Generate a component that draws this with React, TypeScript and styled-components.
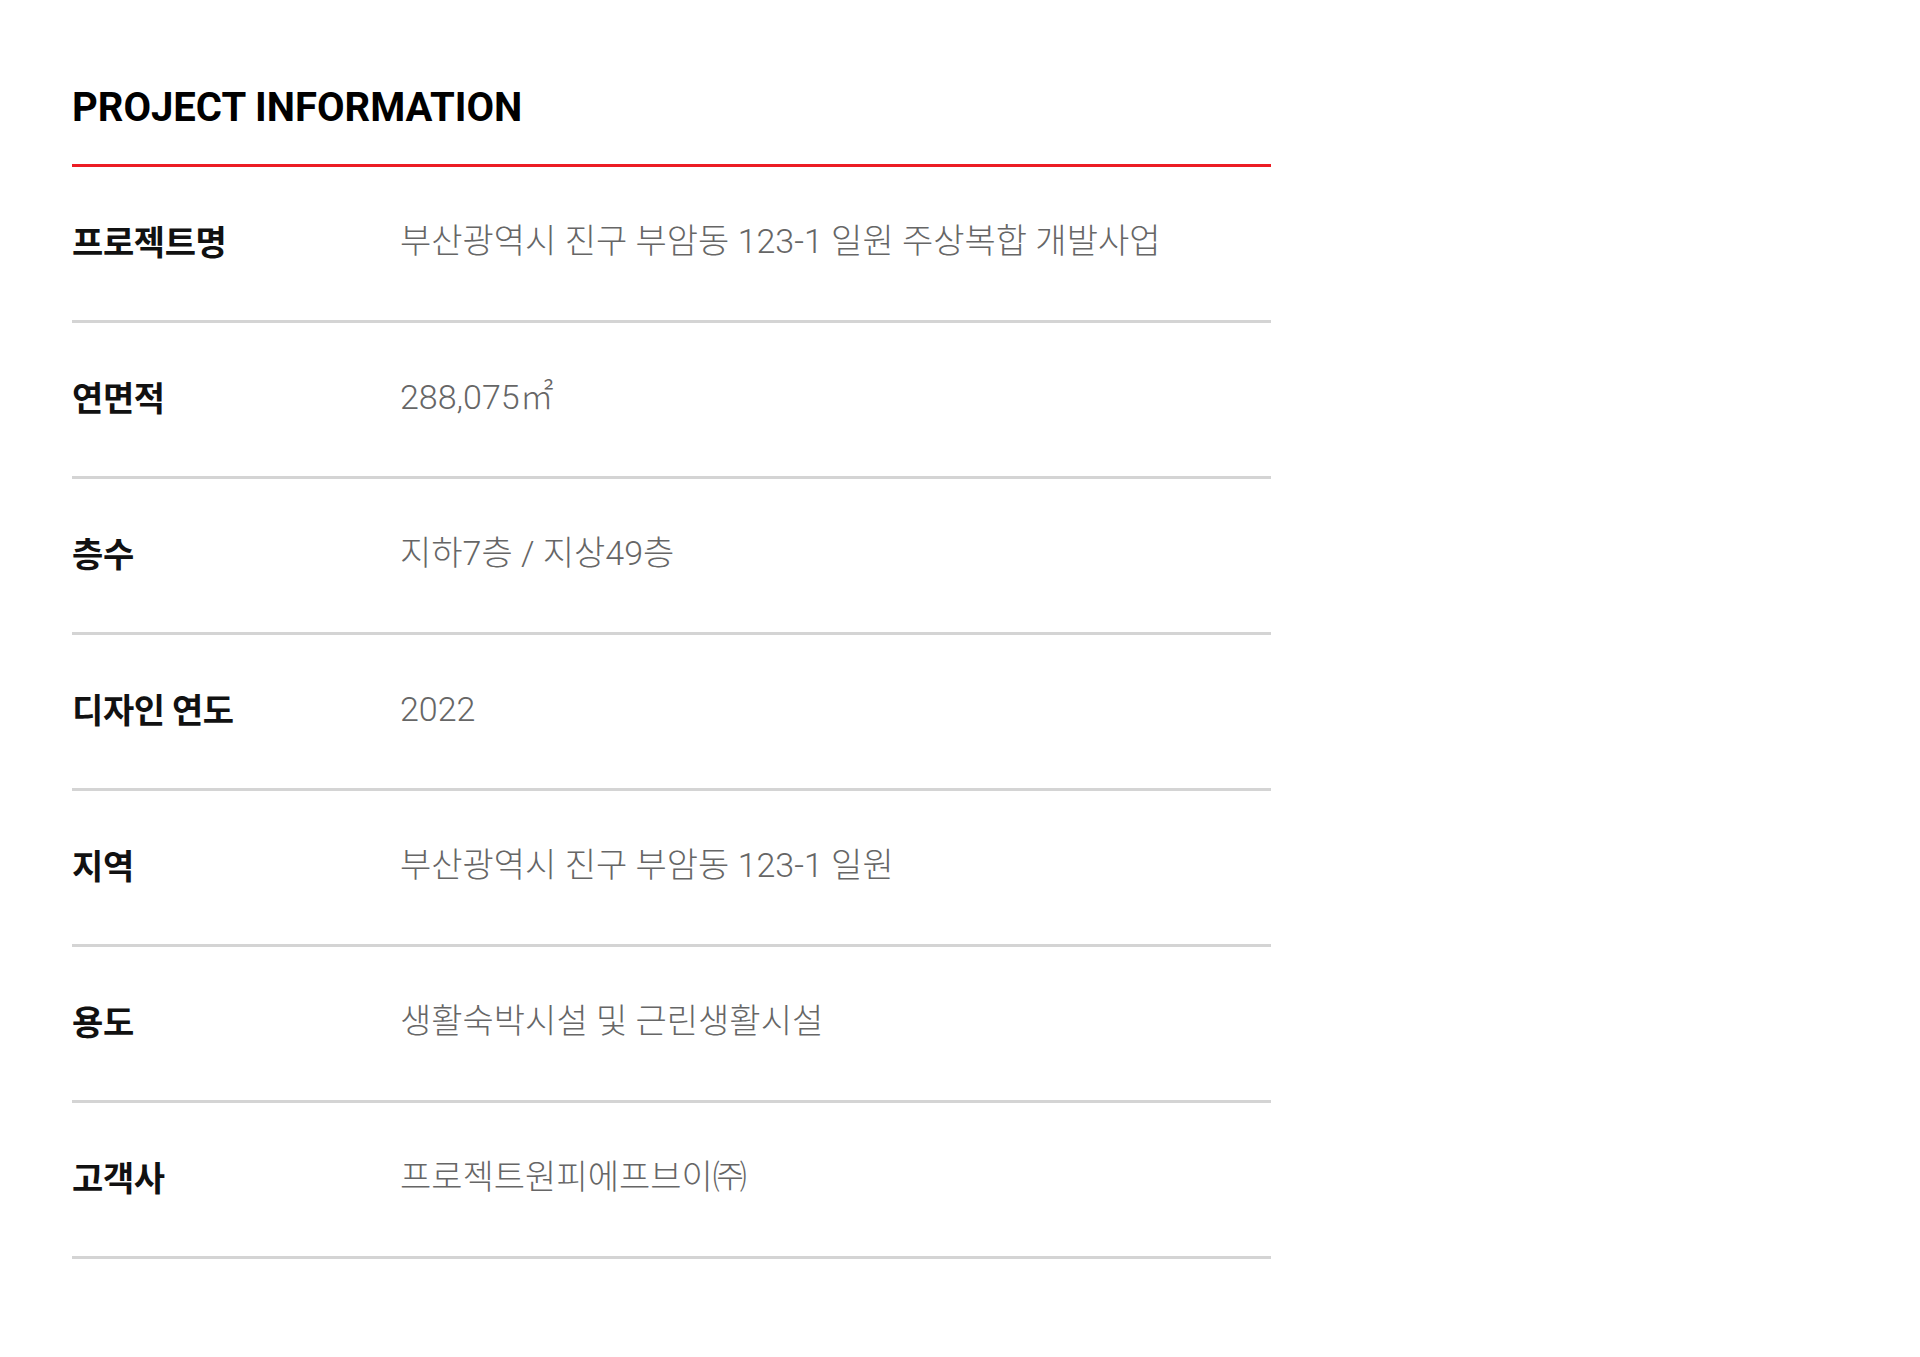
import styled, { createGlobalStyle } from "styled-components";

const GlobalStyle = createGlobalStyle`
  html, body {
    margin: 0;
    padding: 0;
    background: #fff;
  }
  body {
    font-family: Roboto, "Noto Sans CJK KR", sans-serif;
  }
`;

const Section = styled.section`
  width: 1199px;
  padding: 88px 0 100px 72px;
`;

const Title = styled.h2`
  margin: 0 0 36px;
  font-family: Roboto, "Noto Sans CJK KR", sans-serif;
  font-size: 40px;
  line-height: 40px;
  font-weight: 700;
  letter-spacing: 0;
  color: #000;
`;

const InfoList = styled.dl`
  margin: 0;
  border-top: 3px solid #ec1c24;
`;

// each row: 153px body + 3px grey rule
const Row = styled.div`
  display: grid;
  grid-template-columns: 328px 1fr;
  align-items: center;
  box-sizing: border-box;
  height: 156px;
  padding-bottom: 5px;
  border-bottom: 3px solid #d4d4d4;
`;

const Label = styled.dt`
  margin: 0;
  font-family: "Noto Sans CJK KR", sans-serif;
  font-size: 34px;
  line-height: 1.3;
  font-weight: 700;
  color: #111;
  letter-spacing: -0.4px;
`;

const Value = styled.dd`
  margin: 0;
  font-family: Roboto, "Noto Sans CJK KR", sans-serif;
  font-size: 34px;
  line-height: 1.3;
  font-weight: 300;
  color: #666;
  letter-spacing: 0;
`;

const rows = [
  { label: "프로젝트명", value: "부산광역시 진구 부암동 123-1 일원 주상복합 개발사업" },
  { label: "연면적", value: "288,075㎡" },
  { label: "층수", value: "지하7층 / 지상49층" },
  { label: "디자인 연도", value: "2022" },
  { label: "지역", value: "부산광역시 진구 부암동 123-1 일원" },
  { label: "용도", value: "생활숙박시설 및 근린생활시설" },
  { label: "고객사", value: "프로젝트원피에프브이㈜" },
];

export default function App() {
  return (
    <>
      <GlobalStyle />
      <Section>
        <Title>PROJECT INFORMATION</Title>
        <InfoList>
          {rows.map((row) => (
            <Row key={row.label}>
              <Label>{row.label}</Label>
              <Value>{row.value}</Value>
            </Row>
          ))}
        </InfoList>
      </Section>
    </>
  );
}
